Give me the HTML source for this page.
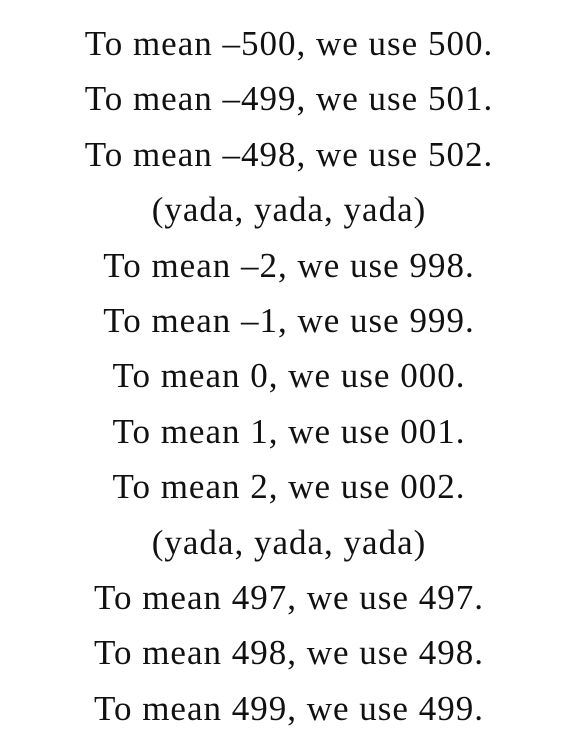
<!DOCTYPE html>
<html><head><meta charset="utf-8"><style>
html,body{margin:0;padding:0;background:#fff;}
body{width:584px;height:745px;overflow:hidden;}
.w{padding-top:16px;padding-right:6px;text-align:center;font-family:"Liberation Serif",serif;font-size:35px;line-height:55.4px;color:#111;letter-spacing:1px;}
</style></head><body><div class="w">
<div>To mean –500, we use 500.</div>
<div>To mean –499, we use 501.</div>
<div>To mean –498, we use 502.</div>
<div>(yada, yada, yada)</div>
<div>To mean –2, we use 998.</div>
<div>To mean –1, we use 999.</div>
<div>To mean 0, we use 000.</div>
<div>To mean 1, we use 001.</div>
<div>To mean 2, we use 002.</div>
<div>(yada, yada, yada)</div>
<div>To mean 497, we use 497.</div>
<div>To mean 498, we use 498.</div>
<div>To mean 499, we use 499.</div>
</div></body></html>
